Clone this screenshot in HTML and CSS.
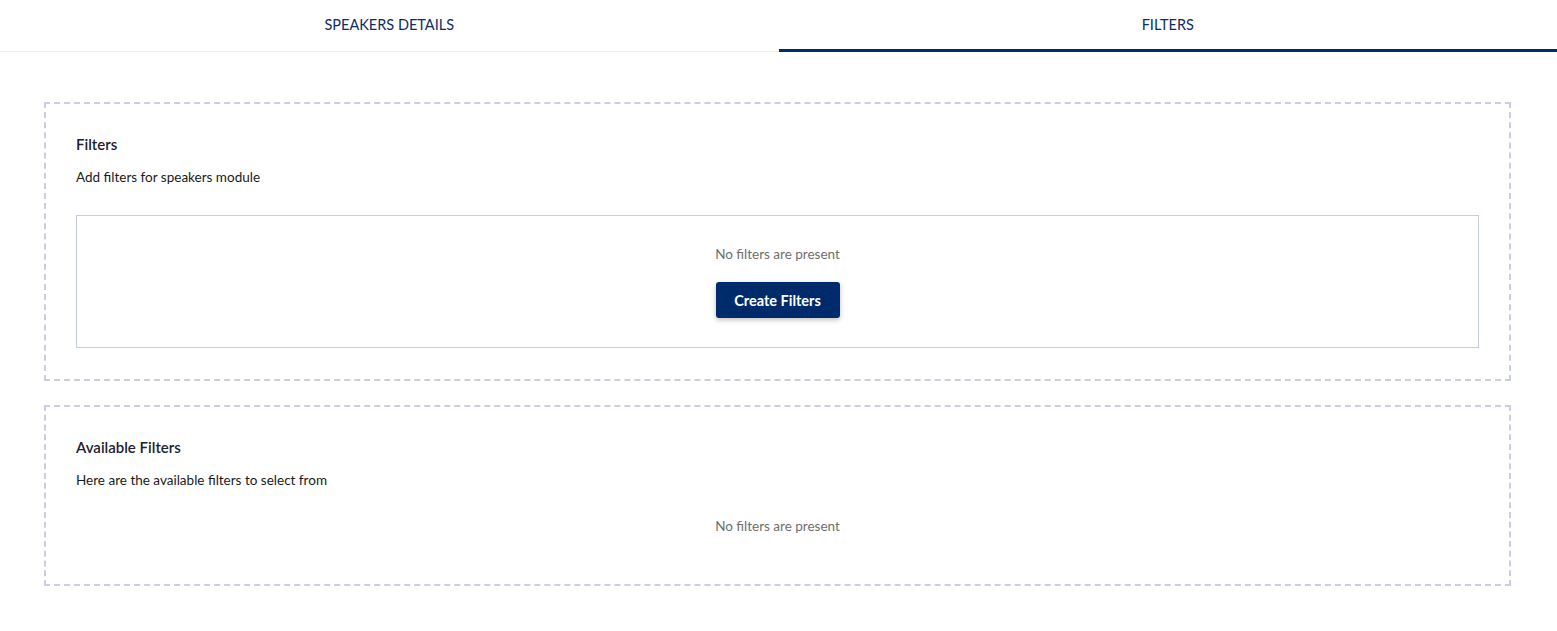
FILE: index.html
```html
<!DOCTYPE html>
<html lang="en">
<head>
    <meta charset="UTF-8">
    <title>Speakers Filters</title>
    <link rel="stylesheet" href="styles.css">
</head>
<body>

<nav class="tabs">
    <div class="tab">SPEAKERS DETAILS</div>
    <div class="tab active">FILTERS</div>
</nav>

<div class="content">
    <section class="panel">
        <h3>Filters</h3>
        <p class="desc">Add filters for speakers module</p>
        <div class="filter-box">
            <p class="empty">No filters are present</p>
            <button type="button" class="create-btn">Create Filters</button>
        </div>
    </section>

    <section class="panel">
        <h3>Available Filters</h3>
        <p class="desc">Here are the available filters to select from</p>
        <p class="empty available">No filters are present</p>
    </section>
</div>

</body>
</html>
```

FILE: styles.css
```css
body {
    margin: 0;
    font-family: Lato, "Noto Sans", sans-serif;
    background: #ffffff;
    color: #1a1a1a;
}
.tabs {
    display: flex;
    border-bottom: 1px solid #eeeeee;
}
.tab {
    flex: 1;
    text-align: center;
    height: 50px;
    line-height: 50px;
    font-size: 14.5px;
    color: #0b2d66;
    border-bottom: 2px solid transparent;
    margin-bottom: -1px;
}
.tab.active {
    border-bottom: 3px solid #002b6b;
    height: 49px;
}
.content {
    padding: 50px 44px 0 44px;
    width: 1467px;
}
.panel {
    border: 2px dashed #c9cfdf;
    padding: 29px 30px 31px 30px;
    margin-bottom: 24px;
}
.panel h3 {
    margin: 0;
    font-size: 15px;
    font-weight: 600;
    line-height: 22px;
    color: #1e2030;
}
.desc {
    margin: 12px 0 0;
    font-size: 13.5px;
    line-height: 20px;
}
.filter-box {
    margin: 28px 0 0;
    border: 1px solid #c5cdda;
    padding: 28px 0 29px;
    text-align: center;
}
.empty {
    margin: 0;
    font-size: 13.5px;
    line-height: 20px;
    color: #6e6e6e;
    text-align: center;
}
.empty.available {
    padding: 26px 0 17px;
}
.create-btn {
    margin-top: 18px;
    width: 124px;
    height: 36px;
    background: #002b6b;
    color: #ffffff;
    border: none;
    border-radius: 3px;
    font-family: inherit;
    font-size: 14.5px;
    font-weight: bold;
    box-shadow: 0 2px 5px rgba(0, 0, 0, 0.25);
    cursor: pointer;
}
```
